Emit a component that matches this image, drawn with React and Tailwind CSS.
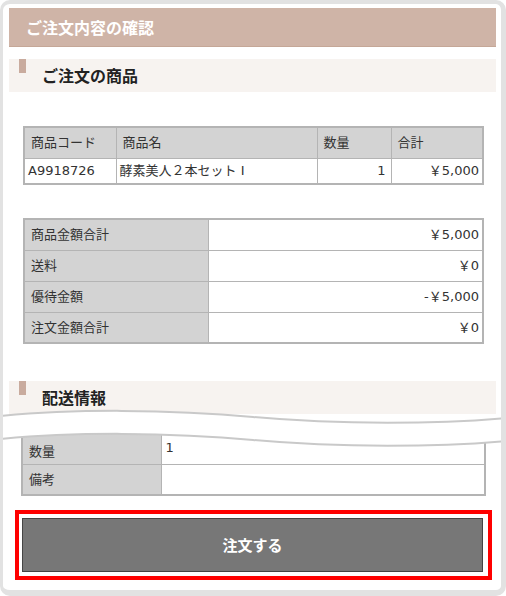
import React from 'react';

const font = "font-['DejaVu_Sans','Noto_Sans_CJK_JP',sans-serif]";

const items = [
  { code: 'A9918726', name: '酵素美人２本セット I', qty: '1', total: '￥5,000' },
];

const totals = [
  { label: '商品金額合計', value: '￥5,000' },
  { label: '送料', value: '￥0' },
  { label: '優待金額', value: '-￥5,000' },
  { label: '注文金額合計', value: '￥0' },
];

const SectionHead = ({ title, className = '' }) => (
  <div className={`relative mx-[6px] mr-[5px] h-[33px] bg-[#f7f3f0] ${className}`}>
    <span className="absolute left-[10px] top-0 h-[14px] w-[7px] bg-[#c9ab9e]" />
    <span className="absolute left-[33px] top-[4px] text-[16px] font-bold leading-[24px] text-[#222]">{title}</span>
  </div>
);

// torn-paper cut between the sections
const Wave = () => (
  <svg className="absolute left-[-3px] top-[396px]" width="506" height="50" viewBox="0 0 506 50">
    <path
      d="M0,16 C70,9 170,9 253,17 C340,25 440,24 506,18 L506,41 C440,47 340,48 253,40 C170,32 70,32 0,39 Z"
      fill="#ffffff"
    />
    <path d="M0,16 C70,9 170,9 253,17 C340,25 440,24 506,18" fill="none" stroke="#c9c9c9" strokeWidth="2" />
    <path d="M0,39 C70,32 170,32 253,40 C340,48 440,47 506,41" fill="none" stroke="#c9c9c9" strokeWidth="2" />
  </svg>
);

export default function App() {
  return (
    <div className={`w-[506px] h-[596px] bg-white font-['Noto_Sans_CJK_JP',sans-serif]`}>
      <div className="relative h-full w-full rounded-[10px] border-t-[4px] border-l-[3px] border-r-[5px] border-b-[6px] border-[#e2e2e2] bg-white overflow-hidden">
        {/* Title */}
        <div className="mt-[4px] ml-[6px] mr-[5px] h-[39px] bg-[#cfb4a7] border-b border-[#c5a797] flex items-center pl-[17px]">
          <span className="text-[16px] font-bold text-white leading-none">ご注文内容の確認</span>
        </div>

        <SectionHead title="ご注文の商品" className="mt-[12px]" />

        {/* Items table */}
        <table className={`mt-[34px] ml-[20px] w-[459px] table-fixed border-collapse border-2 border-[#b4b4b4] text-[13px] text-[#333] ${font}`}>
          <colgroup>
            <col className="w-[92px]" />
            <col className="w-[201px]" />
            <col className="w-[74px]" />
            <col className="w-[92px]" />
          </colgroup>
          <thead>
            <tr className="h-[31px] bg-[#d3d3d3]">
              <th className="border border-[#b4b4b4] px-[6px] text-left font-normal">商品コード</th>
              <th className="border border-[#b4b4b4] px-[6px] text-left font-normal">商品名</th>
              <th className="border border-[#b4b4b4] px-[6px] text-left font-normal">数量</th>
              <th className="border border-[#b4b4b4] px-[6px] text-left font-normal">合計</th>
            </tr>
          </thead>
          <tbody>
            {items.map((it) => (
              <tr key={it.code} className="h-[26px] bg-white">
                <td className="border border-[#b4b4b4] px-[3px]">{it.code}</td>
                <td className="border border-[#b4b4b4] px-[3px]">{it.name}</td>
                <td className="border border-[#b4b4b4] px-[5px] text-right">{it.qty}</td>
                <td className="border border-[#b4b4b4] px-[3px] text-right">{it.total}</td>
              </tr>
            ))}
          </tbody>
        </table>

        {/* Totals table */}
        <table className={`mt-[33px] ml-[20px] w-[459px] table-fixed border-collapse border-2 border-[#b4b4b4] text-[13px] text-[#333] ${font}`}>
          <colgroup>
            <col className="w-[184px]" />
            <col className="w-[275px]" />
          </colgroup>
          <tbody>
            {totals.map((t) => (
              <tr key={t.label} className="h-[31px]">
                <th className="border border-[#b4b4b4] bg-[#d3d3d3] px-[6px] text-left font-normal">{t.label}</th>
                <td className="border border-[#b4b4b4] bg-white px-[3px] text-right">{t.value}</td>
              </tr>
            ))}
          </tbody>
        </table>

        <SectionHead title="配送情報" className="mt-[37px]" />

        {/* Shipping table (partially hidden by the cut) */}
        <table className={`mt-[18px] ml-[18px] w-[463px] table-fixed border-collapse border-2 border-[#b4b4b4] text-[13px] text-[#333] ${font}`}>
          <colgroup>
            <col className="w-[139px]" />
            <col className="w-[324px]" />
          </colgroup>
          <tbody>
            <tr className="h-[31px]">
              <th className="border border-[#b4b4b4] bg-[#d3d3d3] px-[6px] pt-[6px] text-left align-middle font-normal">数量</th>
              <td className="border border-[#b4b4b4] bg-white px-[4px] pt-[4px] align-top">1</td>
            </tr>
            <tr className="h-[31px]">
              <th className="border border-[#b4b4b4] bg-[#d3d3d3] px-[6px] text-left font-normal">備考</th>
              <td className="border border-[#b4b4b4] bg-white px-[4px]"></td>
            </tr>
          </tbody>
        </table>

        {/* Order button */}
        <div className="mt-[14px] ml-[12px] mr-[9px] border-4 border-[#ff0000] p-[4px] pr-[5px] pl-[3px]">
          <button className="flex h-[54px] w-full items-center justify-center border border-[#454545] bg-[#777777] text-[15px] font-bold text-white">
            注文する
          </button>
        </div>

        <Wave />
      </div>
    </div>
  );
}
